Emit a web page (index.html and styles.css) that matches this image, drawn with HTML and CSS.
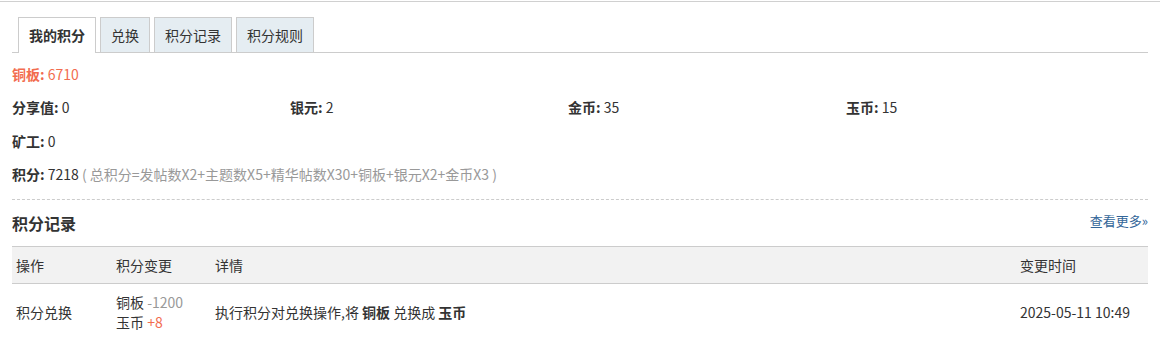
FILE: index.html
```html
<!DOCTYPE html>
<html lang="zh">
<head>
<meta charset="utf-8">
<title>我的积分</title>
<link rel="stylesheet" href="styles.css">
</head>
<body>
<div class="topline"></div>
<div class="wrap">
  <ul class="tabs">
    <li class="tab active">我的积分</li>
    <li class="tab">兑换</li>
    <li class="tab">积分记录</li>
    <li class="tab">积分规则</li>
  </ul>
  <div class="copper"><b>铜板:</b> 6710</div>
  <ul class="stats">
    <li><b>分享值:</b> 0</li>
    <li><b>银元:</b> 2</li>
    <li><b>金币:</b> 35</li>
    <li><b>玉币:</b> 15</li>
    <li><b>矿工:</b> 0</li>
  </ul>
  <div class="total"><b>积分:</b> 7218 <span class="formula">( 总积分=发帖数X2+主题数X5+精华帖数X30+铜板+银元X2+金币X3 )</span></div>
  <div class="head">
    <h2>积分记录</h2>
    <a class="more" href="#">查看更多»</a>
  </div>
  <table class="log">
    <thead>
      <tr><th class="c1">操作</th><th class="c2">积分变更</th><th class="c3">详情</th><th class="c4">变更时间</th></tr>
    </thead>
    <tbody>
      <tr>
        <td>积分兑换</td>
        <td class="chg"><span>铜板 <em class="minus">-1200</em></span><br><span>玉币 <em class="plus">+8</em></span></td>
        <td>执行积分对兑换操作,将 <b>铜板</b> 兑换成 <b>玉币</b></td>
        <td>2025-05-11 10:49</td>
      </tr>
    </tbody>
  </table>
</div>
</body>
</html>
```
FILE: styles.css
```css
html, body {
  margin: 0;
  padding: 0;
  background: #fff;
}
body {
  font-family: "Noto Sans CJK SC", "Noto Sans", sans-serif;
  font-size: 14px;
  color: #333;
}
.topline {
  margin-top: 1px;
  height: 1px;
  background: #d0d0d0;
}
.wrap {
  padding: 0 12px;
}
.tabs {
  list-style: none;
  margin: 15px 0 0;
  padding: 0 0 0 6px;
  display: flex;
  gap: 4px;
  border-bottom: 1px solid #ccc;
  height: 35px;
}
.tab {
  height: 34px;
  line-height: 34px;
  padding: 0 10px;
  border: 1px solid #ccc;
  border-bottom: none;
  background: #e5edf2;
  color: #333;
}
.tab.active {
  background: #fff;
  height: 35px;
  font-weight: bold;
}
.copper {
  margin-top: 11px;
  line-height: 20px;
  color: #f26c4f;
}
.stats {
  list-style: none;
  margin: 13px 0 0;
  padding: 0;
  display: grid;
  grid-template-columns: repeat(4, 278px);
  row-gap: 14px;
}
.stats li {
  line-height: 20px;
}
.total {
  margin-top: 13px;
  line-height: 20px;
  padding-bottom: 15px;
  border-bottom: 1px dashed #ccc;
}
.formula {
  color: #999;
}
.head {
  display: flex;
  justify-content: space-between;
  align-items: center;
  margin-top: 11px;
  height: 24px;
}
.head h2 {
  margin: 0;
  font-size: 16px;
  font-weight: bold;
  line-height: 24px;
}
.more {
  color: #336699;
  text-decoration: none;
  font-size: 13px;
  position: relative;
  top: -3px;
}
.log {
  margin-top: 11px;
  width: 100%;
  border-collapse: collapse;
}
.log th {
  background: #f2f2f2;
  border-top: 1px solid #ccc;
  border-bottom: 1px solid #ccc;
  height: 36px;
  padding: 0 4px;
  text-align: left;
  font-weight: normal;
}
.log td {
  padding: 8px 4px;
  line-height: 20px;
  vertical-align: middle;
}
.c1 { width: 92px; }
.c2 { width: 91px; }
.c4 { width: 124px; }
.log em {
  font-style: normal;
}
.minus { color: #999; }
.plus { color: #f26c4f; }
```
